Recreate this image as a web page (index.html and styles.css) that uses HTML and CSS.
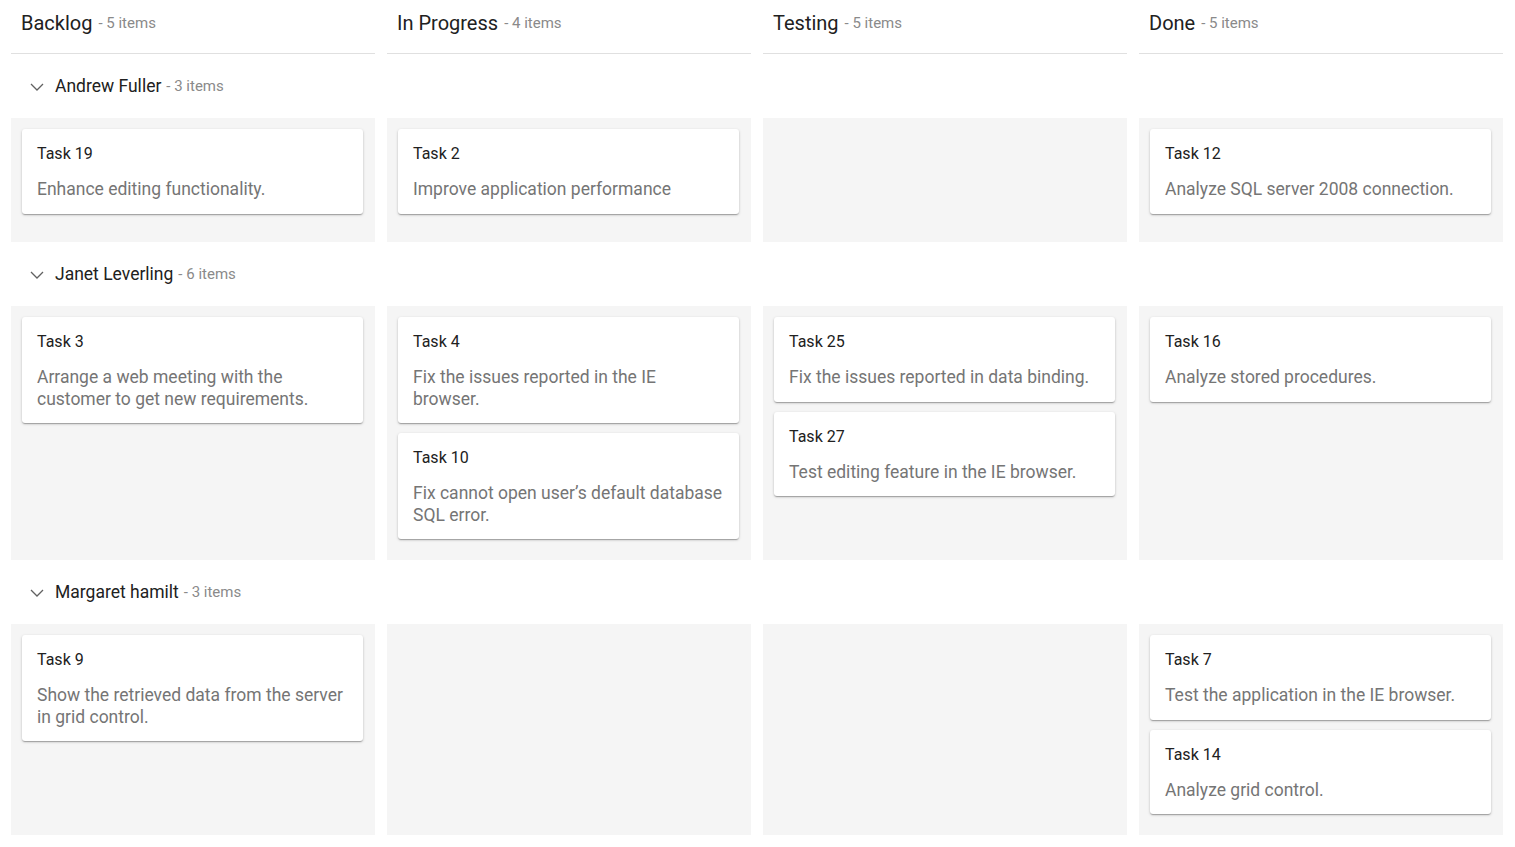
FILE: index.html
```html
<!DOCTYPE html>
<html lang="en">

<head>
    <meta charset="UTF-8">
    <meta name="viewport" content="width=device-width, initial-scale=1.0">
    <title>Kanban</title>
    <link rel="stylesheet" href="styles.css">
</head>

<body>
    <div class="kanban">
        <!-- 列头 -->
        <div class="header-row">
            <div class="col-header"><span class="col-title">Backlog</span><span class="col-count">- 5 items</span></div>
            <div class="col-header"><span class="col-title">In Progress</span><span class="col-count">- 4 items</span></div>
            <div class="col-header"><span class="col-title">Testing</span><span class="col-count">- 5 items</span></div>
            <div class="col-header"><span class="col-title">Done</span><span class="col-count">- 5 items</span></div>
        </div>

        <!-- Andrew Fuller -->
        <div class="swimlane">
            <svg class="chevron" width="14" height="8" viewBox="0 0 14 8"><path d="M1 1l6 6 6-6" fill="none" stroke="#616161" stroke-width="1.3"/></svg>
            <span class="lane-name">Andrew Fuller</span><span class="lane-count">- 3 items</span>
        </div>
        <div class="content-row">
            <div class="cell">
                <div class="card">
                    <div class="card-title">Task 19</div>
                    <div class="card-text">Enhance editing functionality.</div>
                </div>
            </div>
            <div class="cell">
                <div class="card">
                    <div class="card-title">Task 2</div>
                    <div class="card-text">Improve application performance</div>
                </div>
            </div>
            <div class="cell"></div>
            <div class="cell">
                <div class="card">
                    <div class="card-title">Task 12</div>
                    <div class="card-text">Analyze SQL server 2008 connection.</div>
                </div>
            </div>
        </div>

        <!-- Janet Leverling -->
        <div class="swimlane">
            <svg class="chevron" width="14" height="8" viewBox="0 0 14 8"><path d="M1 1l6 6 6-6" fill="none" stroke="#616161" stroke-width="1.3"/></svg>
            <span class="lane-name">Janet Leverling</span><span class="lane-count">- 6 items</span>
        </div>
        <div class="content-row">
            <div class="cell">
                <div class="card">
                    <div class="card-title">Task 3</div>
                    <div class="card-text">Arrange a web meeting with the customer to get new requirements.</div>
                </div>
            </div>
            <div class="cell">
                <div class="card">
                    <div class="card-title">Task 4</div>
                    <div class="card-text">Fix the issues reported in the IE browser.</div>
                </div>
                <div class="card">
                    <div class="card-title">Task 10</div>
                    <div class="card-text">Fix cannot open user’s default database SQL error.</div>
                </div>
            </div>
            <div class="cell">
                <div class="card">
                    <div class="card-title">Task 25</div>
                    <div class="card-text">Fix the issues reported in data binding.</div>
                </div>
                <div class="card">
                    <div class="card-title">Task 27</div>
                    <div class="card-text">Test editing feature in the IE browser.</div>
                </div>
            </div>
            <div class="cell">
                <div class="card">
                    <div class="card-title">Task 16</div>
                    <div class="card-text">Analyze stored procedures.</div>
                </div>
            </div>
        </div>

        <!-- Margaret hamilt -->
        <div class="swimlane">
            <svg class="chevron" width="14" height="8" viewBox="0 0 14 8"><path d="M1 1l6 6 6-6" fill="none" stroke="#616161" stroke-width="1.3"/></svg>
            <span class="lane-name">Margaret hamilt</span><span class="lane-count">- 3 items</span>
        </div>
        <div class="content-row">
            <div class="cell">
                <div class="card">
                    <div class="card-title">Task 9</div>
                    <div class="card-text">Show the retrieved data from the server in grid control.</div>
                </div>
            </div>
            <div class="cell"></div>
            <div class="cell"></div>
            <div class="cell">
                <div class="card">
                    <div class="card-title">Task 7</div>
                    <div class="card-text">Test the application in the IE browser.</div>
                </div>
                <div class="card">
                    <div class="card-title">Task 14</div>
                    <div class="card-text">Analyze grid control.</div>
                </div>
            </div>
        </div>
    </div>
</body>

</html>
```

FILE: styles.css
```css
/* 颜色变量 */
:root {
    --text-color: #212121;
    --muted-color: #757575;
    --count-color: #8a8a8a;
    --cell-background: #f5f5f5;
    --border-color: #e0e0e0;
}

body,
html {
    margin: 0;
    background: #ffffff;
}

body {
    font-family: Roboto, "Liberation Sans", sans-serif;
    color: var(--text-color);
}

.kanban {
    padding: 0 12px 0 11px;
}

.header-row,
.content-row {
    display: grid;
    grid-template-columns: repeat(4, 1fr);
    gap: 12px;
}

.col-header {
    height: 54px;
    border-bottom: 1px solid var(--border-color);
    padding: 0 10px 8px;
    display: flex;
    align-items: center;
    box-sizing: border-box;
}

.col-title {
    font-size: 20px;
}

.col-count {
    font-size: 15px;
    color: var(--count-color);
    margin-left: 6px;
}

.swimlane {
    height: 64px;
    display: flex;
    align-items: center;
    padding-left: 19px;
    box-sizing: border-box;
}

.chevron {
    margin-right: 11px;
    margin-top: 1px;
}

.lane-name {
    font-size: 17.5px;
}

.lane-count {
    font-size: 15px;
    color: var(--count-color);
    margin-left: 5px;
}

.cell {
    background: var(--cell-background);
    padding: 11px 12px 21px 11px;
    min-height: 124px;
    box-sizing: border-box;
    display: flex;
    flex-direction: column;
    gap: 10px;
}

.card {
    background: #ffffff;
    border-radius: 3px;
    padding: 13px 15px 13px;
    box-shadow: 0 1px 3px rgba(0, 0, 0, 0.2), 0 1px 1px rgba(0, 0, 0, 0.14), 0 2px 1px -1px rgba(0, 0, 0, 0.12);
}

.card-title {
    font-size: 16px;
    line-height: 24px;
}

.card-text {
    margin-top: 13px;
    font-size: 17.5px;
    line-height: 21.5px;
    color: var(--muted-color);
}
```
